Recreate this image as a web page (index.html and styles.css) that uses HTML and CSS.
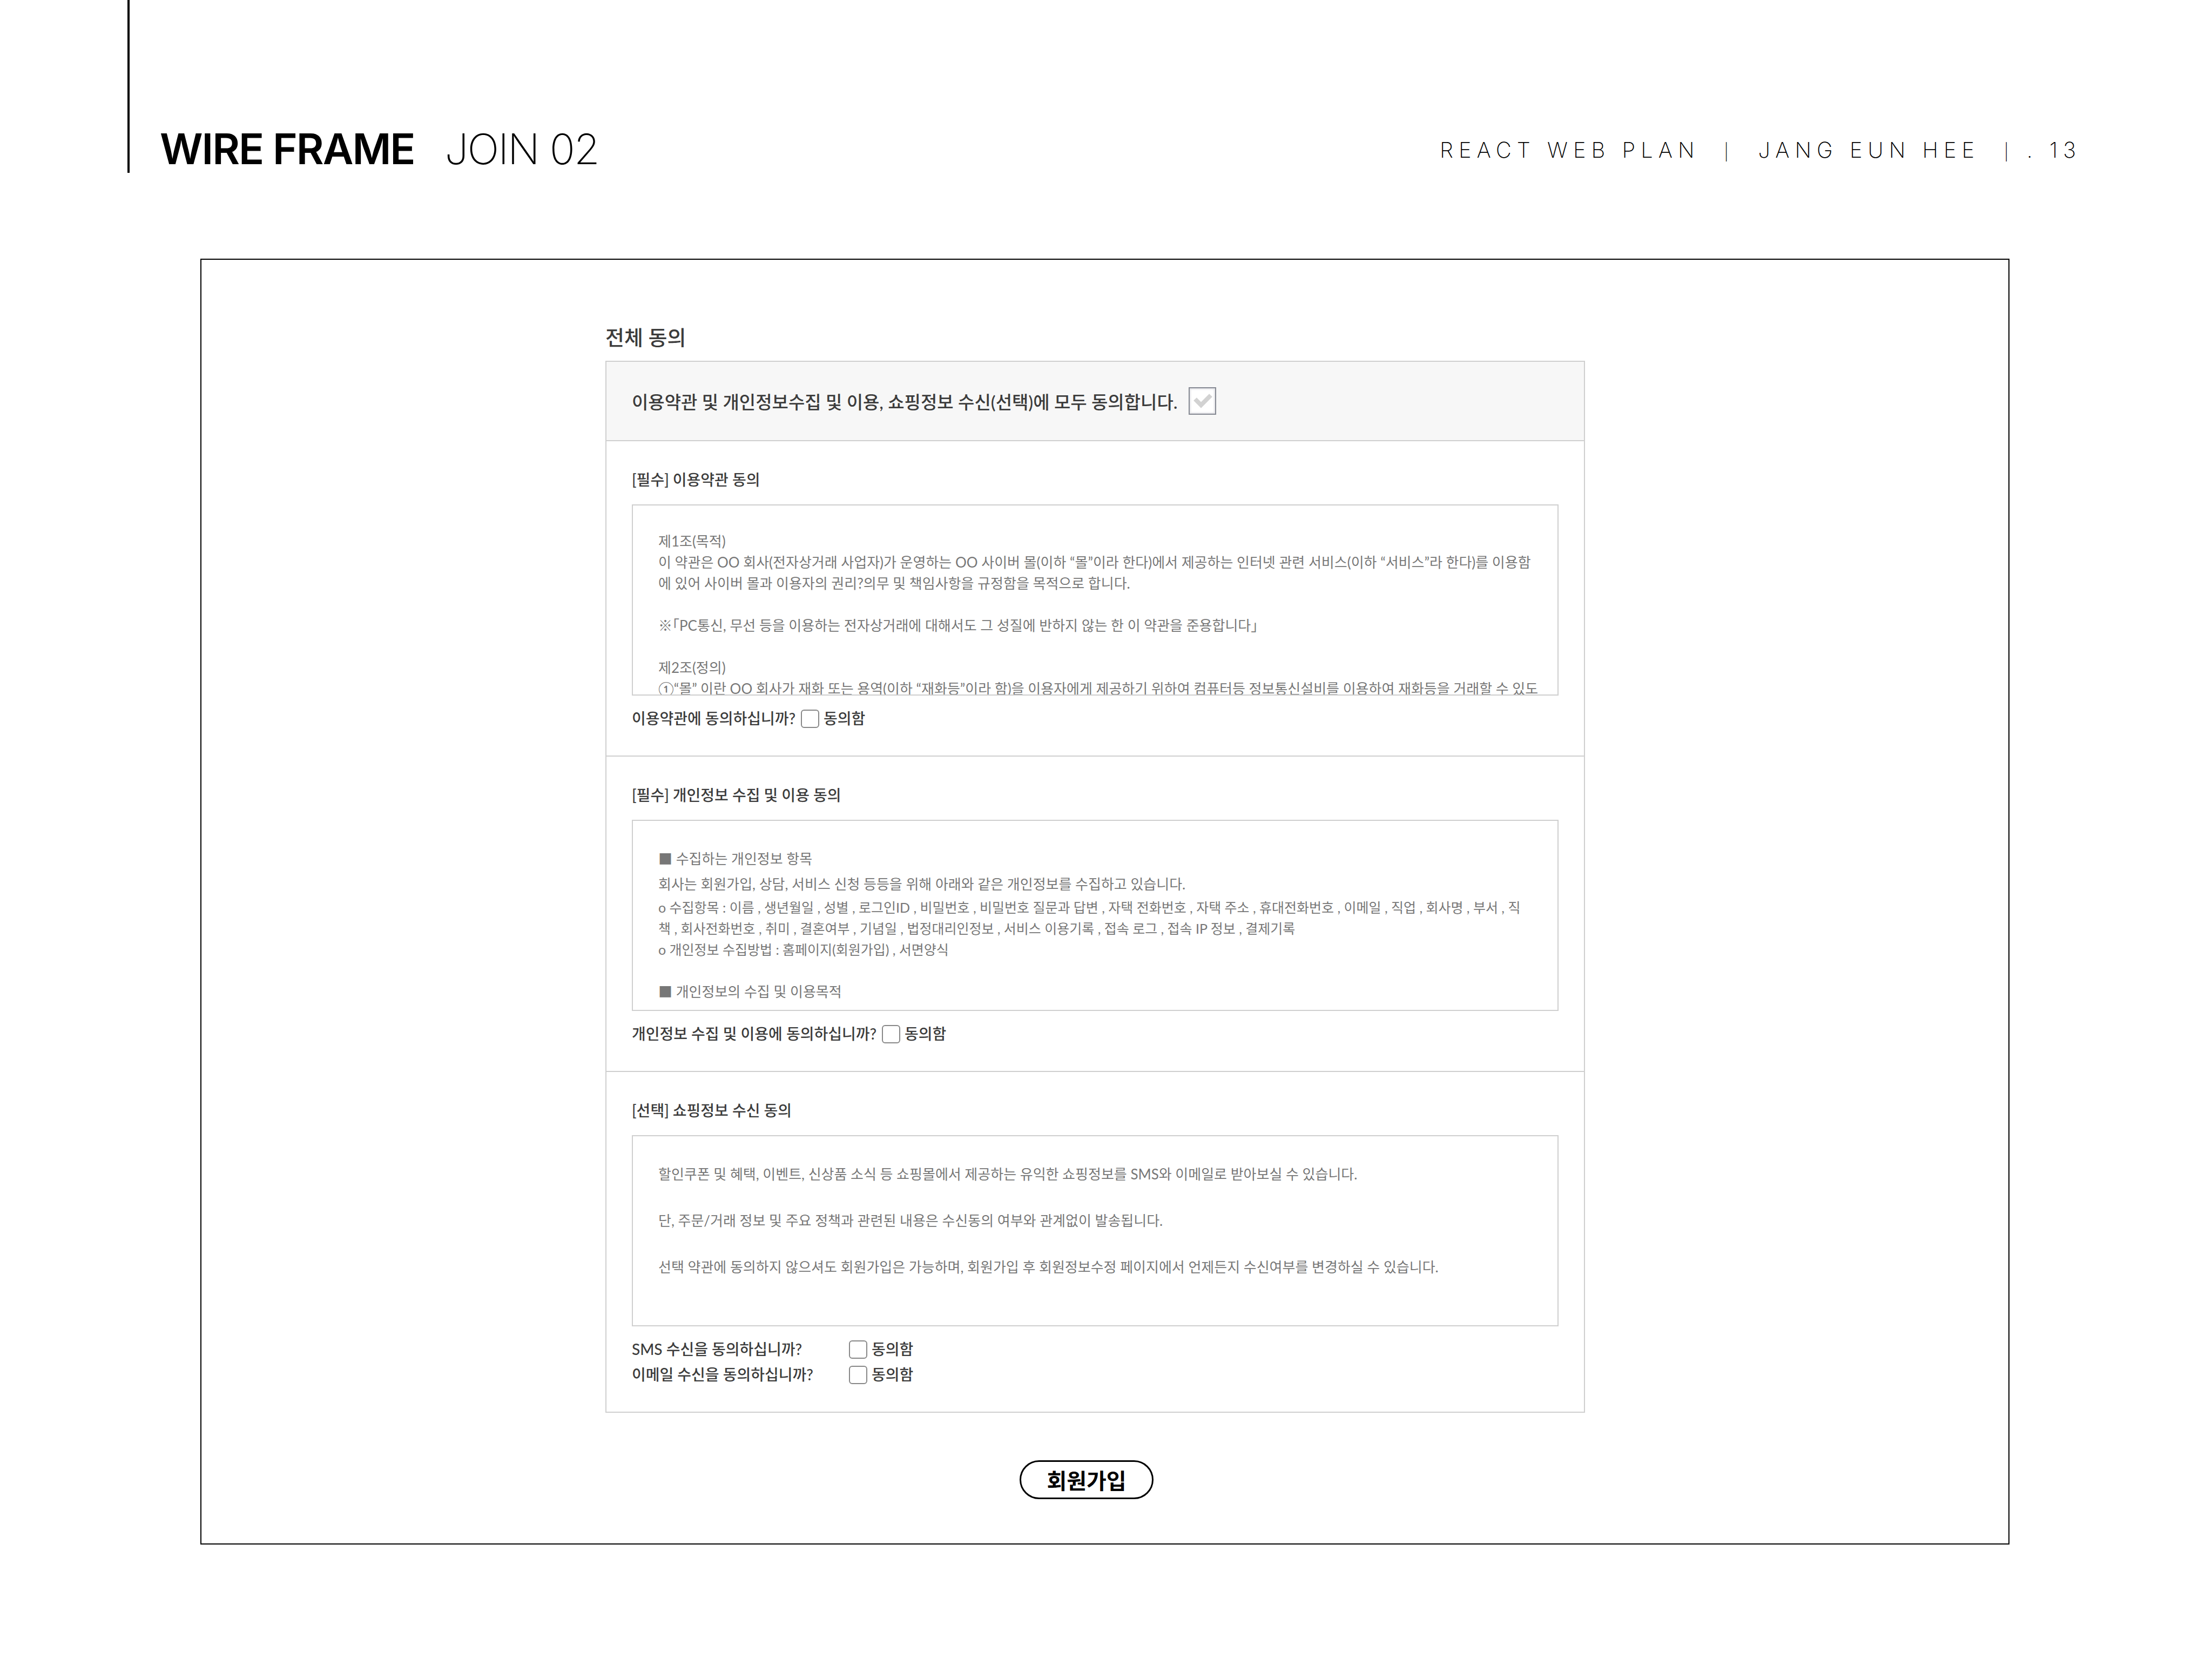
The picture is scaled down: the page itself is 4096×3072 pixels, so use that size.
FILE: index.html
```html
<!DOCTYPE html>
<html lang="ko">
<head>
<meta charset="utf-8">
<meta name="viewport" content="width=device-width, initial-scale=1">
<title>WIRE FRAME - JOIN 02</title>
<link rel="stylesheet" href="styles.css">
</head>
<body>
<header class="slide-header">
  <h1 class="slide-title"><span class="slide-title-main">WIRE FRAME</span><span class="slide-title-sub">JOIN 02</span></h1>
  <p class="slide-meta">REACT WEB PLAN&nbsp; <span class="bar">|</span>&nbsp; JANG EUN HEE&nbsp; <span class="bar">|</span> . 13</p>
</header>
<main class="frame">
  <form class="join">
    <h2 class="join-title">전체 동의</h2>
    <div class="panel">
      <div class="agree-all">
        <label for="agree-all">이용약관 및 개인정보수집 및 이용, 쇼핑정보 수신(선택)에 모두 동의합니다.</label>
        <span class="check-all">
          <input type="checkbox" id="agree-all">
          <svg class="check-mark" viewBox="0 0 51 51" aria-hidden="true"><path d="M12 22 L23 33 L41 15" /></svg>
        </span>
      </div>
      <section class="terms">
        <h3 class="terms-title">[필수] 이용약관 동의</h3>
        <div class="terms-box">
          <p>제1조(목적)<br>이 약관은 OO 회사(전자상거래 사업자)가 운영하는 OO 사이버 몰(이하 “몰”이라 한다)에서 제공하는 인터넷 관련 서비스(이하 “서비스”라 한다)를 이용함<br>에 있어 사이버 몰과 이용자의 권리?의무 및 책임사항을 규정함을 목적으로 합니다.<br><br>※｢PC통신, 무선 등을 이용하는 전자상거래에 대해서도 그 성질에 반하지 않는 한 이 약관을 준용합니다｣<br><br>제2조(정의)<br>①“몰” 이란 OO 회사가 재화 또는 용역(이하 “재화등”이라 함)을 이용자에게 제공하기 위하여 컴퓨터등 정보통신설비를 이용하여 재화등을 거래할 수 있도</p>
        </div>
        <div class="consent">
          <span>이용약관에 동의하십니까?</span>
          <label class="choice"><input type="checkbox" class="box">동의함</label>
        </div>
      </section>
      <section class="terms">
        <h3 class="terms-title">[필수] 개인정보 수집 및 이용 동의</h3>
        <div class="terms-box terms-box-privacy">
          <p>■ 수집하는 개인정보 항목</p>
          <p>회사는 회원가입, 상담, 서비스 신청 등등을 위해 아래와 같은 개인정보를 수집하고 있습니다.</p>
          <p class="terms-items">ο 수집항목 : 이름 , 생년월일 , 성별 , 로그인ID , 비밀번호 , 비밀번호 질문과 답변 , 자택 전화번호 , 자택 주소 , 휴대전화번호 , 이메일 , 직업 , 회사명 , 부서 , 직<br>책 , 회사전화번호 , 취미 , 결혼여부 , 기념일 , 법정대리인정보 , 서비스 이용기록 , 접속 로그 , 접속 IP 정보 , 결제기록<br>ο 개인정보 수집방법 : 홈페이지(회원가입) , 서면양식</p>
          <p>■ 개인정보의 수집 및 이용목적</p>
        </div>
        <div class="consent">
          <span>개인정보 수집 및 이용에 동의하십니까?</span>
          <label class="choice"><input type="checkbox" class="box">동의함</label>
        </div>
      </section>
      <section class="terms">
        <h3 class="terms-title">[선택] 쇼핑정보 수신 동의</h3>
        <div class="terms-box terms-box-spaced">
          <p>할인쿠폰 및 혜택, 이벤트, 신상품 소식 등 쇼핑몰에서 제공하는 유익한 쇼핑정보를 SMS와 이메일로 받아보실 수 있습니다.</p>
          <p>단, 주문/거래 정보 및 주요 정책과 관련된 내용은 수신동의 여부와 관계없이 발송됩니다.</p>
          <p>선택 약관에 동의하지 않으셔도 회원가입은 가능하며, 회원가입 후 회원정보수정 페이지에서 언제든지 수신여부를 변경하실 수 있습니다.</p>
        </div>
        <div class="consent consent-grid">
          <span>SMS 수신을 동의하십니까?</span>
          <label class="choice"><input type="checkbox" class="box">동의함</label>
          <span>이메일 수신을 동의하십니까?</span>
          <label class="choice"><input type="checkbox" class="box">동의함</label>
        </div>
      </section>
    </div>
    <div class="actions"><button type="button" class="join-button">회원가입</button></div>
  </form>
</main>
</body>
</html>
```
FILE: styles.css
```css
* {
  box-sizing: border-box;
}

body {
  margin: 0;
  background: #fff;
  color: #3c3c3c;
  font-family: Lato, "Noto Sans CJK KR", sans-serif;
}

h1, h2, h3, p {
  margin: 0;
  font-weight: 400;
}

.slide-header {
  display: flex;
  justify-content: space-between;
  align-items: flex-end;
  height: 320px;
  margin: 0 242px 0 236px;
  padding-left: 56px;
  border-left: 4px solid #000;
  color: #000;
  font-family: Inter, sans-serif;
}

.slide-title {
  display: flex;
  gap: 56px;
  font-size: 78px;
  line-height: 88px;
  letter-spacing: -2px;
}

.slide-title-main {
  font-weight: 600;
}

.slide-title-sub {
  font-weight: 200;
}

.slide-meta {
  font-size: 40px;
  font-weight: 200;
  line-height: 78px;
  letter-spacing: 10px;
}

.bar {
  margin: 0 2px;
  font-size: 30px;
}

.frame {
  display: grid;
  grid-template-columns: minmax(0, 748fr) minmax(0, 1814fr) minmax(0, 784fr);
  margin: 159px 375px 212px 371px;
  padding: 117px 0 82px;
  border: 2px solid #000;
}

.join {
  grid-column: 2;
}

.join-title {
  font-size: 38px;
  font-weight: 500;
  line-height: 52px;
  margin-bottom: 18px;
}

.panel {
  border: 2px solid #cfcfcf;
}

.agree-all {
  display: flex;
  align-items: center;
  gap: 20px;
  height: 145px;
  padding: 0 47px;
  background: #f7f7f7;
  font-size: 33px;
  font-weight: 500;
}

.check-all {
  position: relative;
  width: 51px;
  height: 51px;
}

.check-all input {
  appearance: none;
  display: block;
  width: 51px;
  height: 51px;
  margin: 0;
  border: 2px solid #868a93;
  background: #fff;
  box-shadow: inset 0 0 3px 2px #e4e4e8;
}

.check-mark {
  position: absolute;
  inset: 0;
  fill: none;
  stroke: #d2d2d2;
  stroke-width: 8;
  pointer-events: none;
}

.terms {
  padding: 51px 47px 45px;
  border-top: 2px solid #cfcfcf;
}

.terms-title {
  margin-bottom: 26px;
  font-size: 28px;
  font-weight: 500;
  line-height: 40px;
}

.terms-box {
  height: 354px;
  padding: 47px;
  overflow: hidden;
  border: 2px solid #cfcfcf;
  color: #777;
  font-size: 26px;
  line-height: 39px;
  white-space: nowrap;
}

.terms-box-privacy,
.terms-box-spaced {
  padding-top: 51px;
}

.terms-box-privacy p:nth-child(1) {
  margin-bottom: 8px;
}

.terms-box-privacy p:nth-child(2) {
  margin-bottom: 4px;
}

.terms-items {
  margin-bottom: 39px;
  font-size: 25px;
}

.terms-box-spaced {
  display: flex;
  flex-direction: column;
  gap: 47px;
}

.consent {
  display: flex;
  gap: 10px;
  padding-top: 19px;
  font-size: 28px;
  font-weight: 500;
  line-height: 47px;
}

.consent-grid {
  display: grid;
  grid-template-columns: 392px max-content;
  row-gap: 0;
}

.choice {
  display: flex;
  align-items: center;
  gap: 8px;
}

.box {
  appearance: none;
  width: 34px;
  height: 34px;
  margin: 0;
  border: 2px solid #888;
  border-radius: 6px;
  background: #fff;
}

.actions {
  display: flex;
  justify-content: center;
  padding: 88px 32px 0 0;
}

.join-button {
  padding: 0 47px;
  border: 3px solid #000;
  border-radius: 36px;
  background: #fff;
  color: #000;
  font-family: "Noto Sans CJK KR", sans-serif;
  font-size: 40px;
  font-weight: 700;
  line-height: 66px;
}
```
